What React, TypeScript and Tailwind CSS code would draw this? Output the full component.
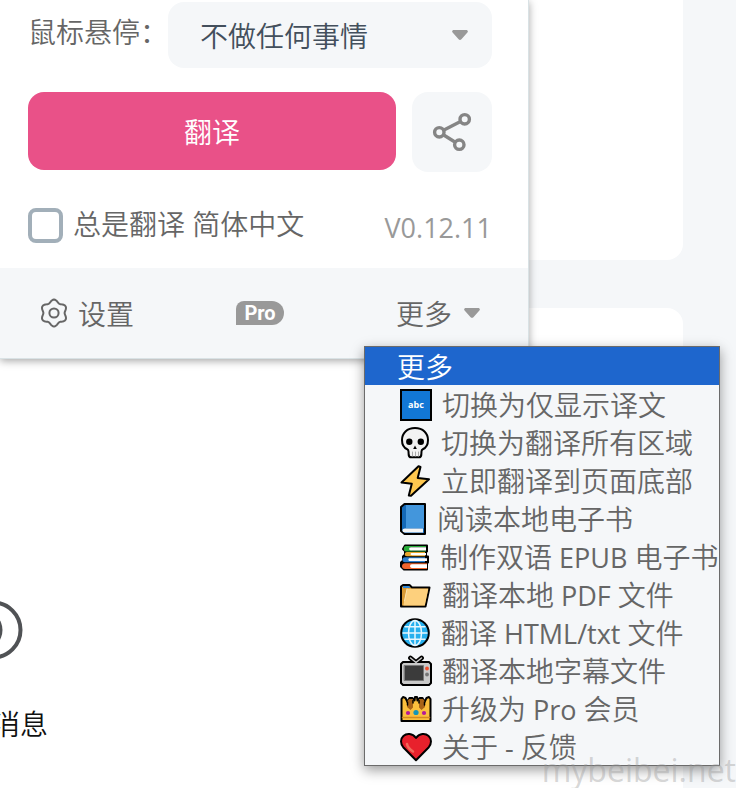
import React from 'react';

type IconProps = { className?: string };

const outline = { stroke: '#000', strokeWidth: 2, strokeLinejoin: 'round' as const, strokeLinecap: 'round' as const };

// six soft lobes around the centre
const gearPath =
  Array.from({ length: 72 }, (_, i) => {
    const a = (i * 5 * Math.PI) / 180;
    const r = 12 + 1.4 * Math.cos(6 * a);
    return `${i ? 'L' : 'M'}${(15 + r * Math.sin(a)).toFixed(2)} ${(15 - r * Math.cos(a)).toFixed(2)}`;
  }).join('') + 'Z';

const GearIcon: React.FC<IconProps> = ({ className }) => (
  <svg className={className} viewBox="1 0 28 30" fill="none" stroke="#666" strokeWidth="2" strokeLinejoin="round">
    <path d={gearPath} />
    <circle cx="15" cy="15" r="4.6" />
  </svg>
);

const ShareIcon: React.FC<IconProps> = ({ className }) => (
  <svg className={className} viewBox="0 0 40 40" fill="none" stroke="#858585" strokeWidth="3.4">
    <circle cx="32.7" cy="7.3" r="4.7" />
    <circle cx="7.3" cy="20.3" r="4.7" />
    <circle cx="27.3" cy="32.7" r="4.7" />
    <path d="M11.5 18.2 28.5 9.6M11.3 22.7 23.3 30.2" />
  </svg>
);

const CaretIcon: React.FC<IconProps> = ({ className }) => (
  <svg className={className} viewBox="0 0 16 10" fill="#999">
    <path d="M1.8 0h12.4c1.5 0 2.2 1.5 1.2 2.6L9.4 9.2c-.8.9-2 .9-2.8 0L.6 2.6C-.4 1.5.3 0 1.8 0Z" />
  </svg>
);

const AbcIcon = () => (
  <svg className="h-8 w-8 shrink-0" viewBox="0 0 32 32">
    <rect x="1" y="1" width="30" height="30" fill="#1277d5" stroke="#000" strokeWidth="2" />
    <text x="16" y="19" textAnchor="middle" fill="#fff" fontSize="9" fontWeight="700" fontFamily="Open Sans, sans-serif">abc</text>
  </svg>
);

const SkullIcon = () => (
  <svg className="h-8 w-[31px] shrink-0" viewBox="0 0 31 32" {...outline}>
    <path d="M15 1C7 1 2 6.200 2 13c0 4.600 2.200 8 5.200 9.200 1 .4 1.300 1.300 1.300 2.300L8.700 28c.2 1.500 1 2.200 2.300 2.200h8c1.300 0 2.100-.7 2.300-2.200l.2-3.500c0-1 .3-1.900 1.300-2.300C25.800 21 28 17.600 28 13 28 6.200 23 1 15 1Z" fill="#f2f2f2" />
    <path d="M12.500 25v4M15.500 25v4M18.500 25v4" stroke="#aaa" strokeWidth="1" />
    <circle cx="9.300" cy="14.700" r="3.200" fill="#000" stroke="none" />
    <circle cx="20.800" cy="14.700" r="3.200" fill="#000" stroke="none" />
    <path d="M15 18.500 16.800 22h-3.600Z" fill="#000" stroke="none" />
  </svg>
);

const BoltIcon = () => (
  <svg className="h-8 w-[31px] shrink-0" viewBox="0 0 31 32" {...outline}>
    <path d="M18.500 1.200 1.500 17.500l10.300 1.200L8.800 30.500 11 30.800 29 14.200l-11.300-1.300L20.500 2Z" fill="#ffc84f" />
  </svg>
);

const BookIcon = () => (
  <svg className="h-8 w-[27px] shrink-0" viewBox="0 0 27 32" {...outline}>
    <path d="M4.500 1H25v30H4.500L1 28V4Z" fill="#1469b8" />
    <path d="M6 2h18v23H6Z" fill="#4396dc" stroke="none" />
    <path d="M5 25.500h18v4H5c-1.700 0-2.500-.8-2.500-2s.8-2 2.500-2Z" fill="#f5f5f5" stroke="none" />
  </svg>
);

const BooksIcon = () => (
  <svg className="h-8 w-[30px] shrink-0" viewBox="0 0 30 32">
    <path d="M5 4.500h22v6h-1v5h2v6h-1v7H4l-3-3v-4l2-2v-4l2-2V10L3 8Z" fill="#000" stroke="#000" strokeWidth="2" strokeLinejoin="round" />
    <path d="M6 5h20v1H12c-3 0-3 3.500 0 3.500h14v1H6C3 10.500 3 5 6 5Z" fill="#28ad3b" />
    <path d="M11 6.200h15v3.200H11c-2.500 0-2.500-3.200 0-3.200Z" fill="#fff" />
    <path d="M7 11h18v4.300H7c-3 0-3-4.300 0-4.300Z" fill="#e9a52d" />
    <path d="M12 12h14v2.200H12c-2 0-2-2.200 0-2.200Z" fill="#fff" />
    <path d="M5 16.200h20v5H5c-3.500 0-3.500-5 0-5Z" fill="#2b7fce" />
    <path d="M10 17.300h17v2.800H10c-2.200 0-2.200-2.800 0-2.800Z" fill="#fff" />
    <path d="M5 22.200h22v5.800H5c-4 0-4-5.800 0-5.800Z" fill="#f0642c" />
    <path d="M12 23.300h15V27H12c-2.600 0-2.600-3.700 0-3.700Z" fill="#fff" />
  </svg>
);

const FolderIcon = () => (
  <svg className="h-8 w-8 shrink-0" viewBox="0 0 32 32" {...outline}>
    <path d="M1 27.500V7.500L3 6h6.500l2.500 2.500h17.500l-4 19Z" fill="#d99a35" />
    <path d="M3 7h6l1.500 2H3Z" fill="#2f86d6" stroke="none" />
    <path d="M6.800 9.700h21.500L24.800 26.500H3.300Z" fill="#fdd07d" stroke="none" />
    <path d="M4.500 22 7 10" stroke="#fbe2ae" strokeWidth="1" />
  </svg>
);

const GlobeIcon = () => (
  <svg className="h-8 w-[31px] shrink-0" viewBox="0 0 31 32">
    <circle cx="15" cy="16" r="13.800" fill="#27b0ee" stroke="#000" strokeWidth="2" />
    <g fill="none" stroke="#e8f7fe" strokeWidth="1.500">
      <ellipse cx="15" cy="16" rx="6.500" ry="12.500" />
      <path d="M15 3.500v25M2.500 16h25M4.500 9.800h21M4.500 22.200h21" />
    </g>
  </svg>
);

const TvIcon = () => (
  <svg className="h-8 w-8 shrink-0" viewBox="0 0 32 32" {...outline}>
    <path d="M10.500 3 16 7.500 21.500 3" fill="none" strokeWidth="4.800" />
    <path d="M3 7h26l2 2v19l-2 2H3l-2-2V9Z" fill="#c9c9c9" />
    <path d="M10.500 3 16 7.500 21.500 3" fill="none" stroke="#cfcfcf" strokeWidth="1.400" />
    <rect x="4.500" y="10.500" width="19" height="15" fill="#3b3b3b" stroke="#777" strokeWidth="1" />
    <circle cx="27" cy="13.500" r="1.900" fill="#f0502f" stroke="none" />
    <circle cx="27" cy="19.500" r="1.900" fill="#767676" stroke="none" />
  </svg>
);

const CrownIcon = () => (
  <svg className="h-8 w-8 shrink-0" viewBox="0 0 32 32" {...outline}>
    <path d="M1.500 28V6l1.500-2 2.500 1 2 4 2-4h3l2 2.500L15 4h2l.5 3.500L19.500 5h3l2 4 2-4L29 4l1.500 2v22Z" fill="#fbbf3d" />
    <path d="M7 8.500 9 6h4v8.500L10.500 17 7 14ZM19 6h4l2 2.500V14l-3.500 3-2.500-2.500Z" fill="#a96418" stroke="none" />
    <path d="M7.500 9v3M24.500 9v3M13 7.500V10M19 7.500V10" strokeWidth="1.500" />
    <path d="M2.500 24.500h27" stroke="#d38a20" strokeWidth="1.500" />
    <circle cx="8" cy="20" r="2.100" fill="#b3199b" stroke="none" />
    <circle cx="16" cy="19.500" r="2.600" fill="#1596b8" stroke="none" />
    <circle cx="24" cy="20" r="2.100" fill="#b3199b" stroke="none" />
  </svg>
);

const HeartIcon = () => (
  <svg className="h-8 w-8 shrink-0" viewBox="0 0 32 32" {...outline}>
    <path d="M16 29.300 3.200 16.200C.2 12.700.4 7.700 3.400 5 6.800 2 12.300 2.300 16 7c3.700-4.700 9.200-5 12.600-2 3 2.700 3.200 7.700.2 11.200Z" fill="#e8212c" />
    <path d="M7 13c.5 3.500 3 5.500 6 7.500" fill="none" stroke="#f0685a" strokeWidth="2.500" />
  </svg>
);

const menuItems = [
  { icon: AbcIcon, label: '切换为仅显示译文' },
  { icon: SkullIcon, label: '切换为翻译所有区域' },
  { icon: BoltIcon, label: '立即翻译到页面底部' },
  { icon: BookIcon, label: '阅读本地电子书' },
  { icon: BooksIcon, label: '制作双语 EPUB 电子书' },
  { icon: FolderIcon, label: '翻译本地 PDF 文件' },
  { icon: GlobeIcon, label: '翻译 HTML/txt 文件' },
  { icon: TvIcon, label: '翻译本地字幕文件' },
  { icon: CrownIcon, label: '升级为 Pro 会员' },
  { icon: HeartIcon, label: '关于 - 反馈' },
];

// latin runs are set slightly smaller than the Chinese text
const MixedText: React.FC<{ text: string }> = ({ text }) => (
  <span className="whitespace-pre">
    {text.split(/([\x20-\x7e]+)/).map((part, i) =>
      i % 2 ? <span key={i} className="text-[27px] font-normal">{part}</span> : part
    )}
  </span>
);

const MoreMenu: React.FC = () => (
  <ul className="absolute left-[364px] top-[78px] z-20 w-[356px] border border-[#6b6b6b] bg-[#f5f7f9] text-[#666] shadow-[0_4px_12px_rgba(0,0,0,0.4)]">
    <li>
      <button className="flex h-[38px] w-full items-center bg-[#1e66cd] pl-8 pt-0.5 text-white">更多</button>
    </li>
    {menuItems.map(({ icon: Icon, label }) => (
      <li key={label}>
        <button className="flex h-[38px] w-full items-center gap-2.5 pl-[35px] pt-0.5 text-left">
          <Icon />
          <MixedText text={label} />
        </button>
      </li>
    ))}
  </ul>
);

const Popup: React.FC = () => (
  <section className="absolute left-0 top-0 z-10 w-[529px] border-b border-r border-[#d9e2e5] bg-white text-[#666] shadow-[0_2px_8px_rgba(0,0,0,0.35)]">
    <div className="pb-6 pl-7 pr-9 pt-0.5">
      <div className="flex items-center">
        <label htmlFor="hover" className="w-[140px] shrink-0 pb-1.5">鼠标悬停：</label>
        <div className="relative flex-1">
          <select id="hover" className="block h-[66px] w-full appearance-none rounded-2xl bg-[#f5f7f9] pl-8 pt-0.5 text-[#434f5c]">
            <option>不做任何事情</option>
          </select>
          <CaretIcon className="pointer-events-none absolute right-6 top-7 h-2.5 w-4" />
        </div>
      </div>

      <div className="mt-6 flex items-start gap-4">
        <button className="h-[78px] flex-1 rounded-2xl bg-[#e95188] pt-0.5 text-white">翻译</button>
        <button aria-label="分享" className="flex size-20 items-center justify-center rounded-2xl bg-[#f5f7f9]">
          <ShareIcon className="size-10" />
        </button>
      </div>

      <div className="mt-8 flex h-10 items-start justify-between">
        <div className="flex items-start gap-2.5">
          <input id="always" type="checkbox" className="mt-1 size-[35px] appearance-none rounded-lg border-4 border-[#a2afb9] bg-white" />
          <label htmlFor="always">总是翻译 简体中文</label>
        </div>
        <span className="pt-1 text-[27px] font-normal text-[#999]">V0.12.11</span>
      </div>
    </div>

    <footer className="relative flex h-[90px] items-center bg-[#f5f7f9] pl-10 pr-12">
      <a href="#settings" className="flex items-center gap-2.5">
        <GearIcon className="h-[30px] w-7" />
        <span className="pt-0.5">设置</span>
      </a>
      <a href="#pro" className="ml-[102px] flex h-6 w-12 items-center justify-center rounded-r-xl rounded-tl-lg bg-[#999] font-[Roboto] text-xl font-bold text-white">
        Pro
      </a>
      <div className="relative ml-auto">
        <select aria-label="更多" className="block w-[84px] appearance-none bg-transparent pt-0.5">
          <option>更多</option>
        </select>
        <CaretIcon className="pointer-events-none absolute right-0 top-4 h-2.5 w-4" />
      </div>
      <MoreMenu />
    </footer>
  </section>
);

export default function App() {
  return (
    <div className="relative flex min-h-screen flex-col overflow-hidden bg-[#f5f7f9] pr-[53px] font-['Open_Sans','Noto_Sans_CJK_SC',sans-serif] text-[28px] font-[350] leading-10">
      <div className="h-[260px] rounded-br-2xl bg-white" />
      <main className="mt-12 flex-1 rounded-tr-2xl bg-white pt-[292px]">
        <a href="#messages" className="-ml-2 flex w-14 flex-col gap-11 text-[#111]">
          <svg className="h-[60px] w-8" viewBox="0 0 32 60">
            <circle cx="1" cy="30" r="27.500" fill="none" stroke="#505255" strokeWidth="4" />
            <ellipse cx="-8" cy="30" rx="18.500" ry="19" fill="#505255" />
          </svg>
          消息
        </a>
      </main>
      <Popup />
      <div className="pointer-events-none absolute bottom-0 right-0 z-30 text-[32px] font-normal leading-9 text-[#999]/40">mybeibei.net</div>
    </div>
  );
}
